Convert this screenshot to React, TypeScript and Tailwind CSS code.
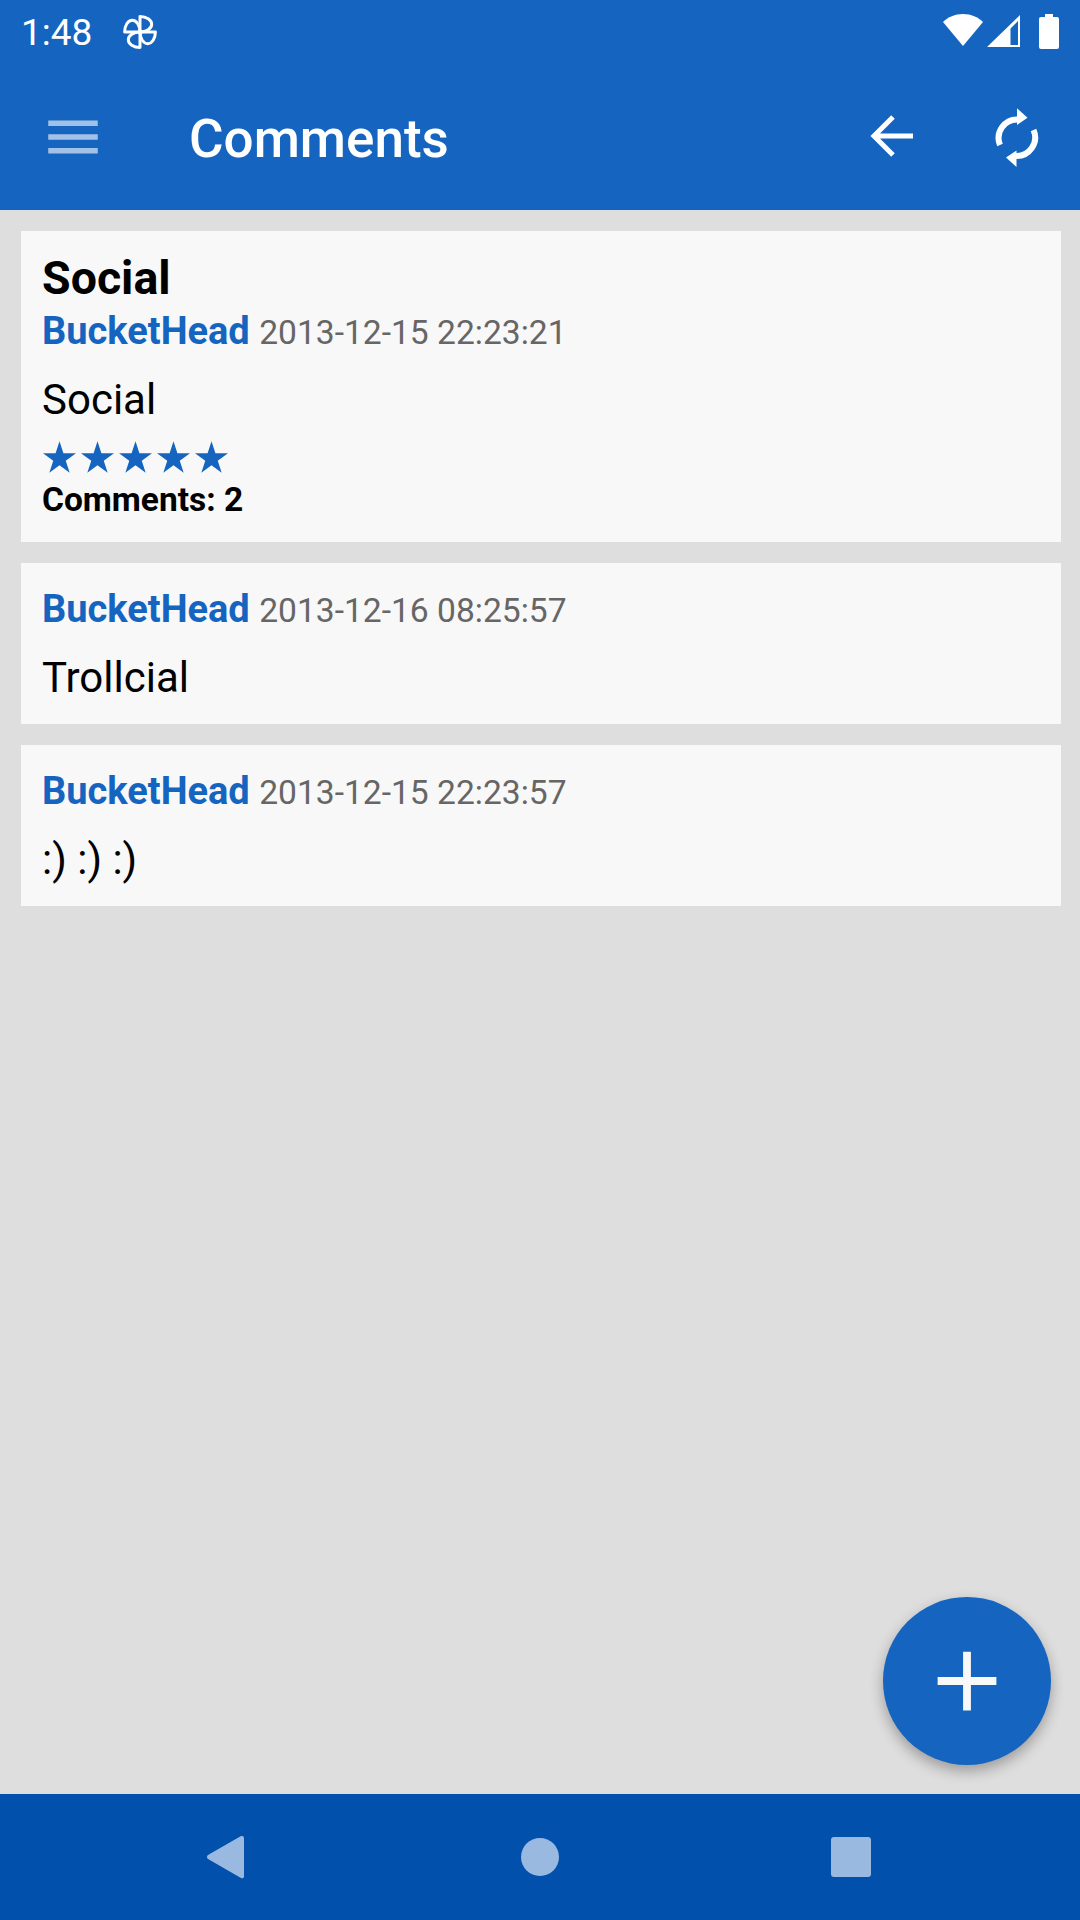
import { IoMdAdd, IoMdMenu } from "react-icons/io";

function Meta({ date }: { date: string }) {
  return (
    <p className="text-[33.6px] leading-[46px] text-[#666666]">
      <span className="font-bold text-[#1565c0] text-[38px]">BucketHead </span>{date}
    </p>
  );
}

function CommentCard({ date, text }: { date: string; text: string }) {
  return (
    <article className="bg-[#f8f8f8] px-[21px] pt-[23px] h-[161px]">
      <Meta date={date} />
      <p className="mt-[16px] text-[42px] leading-[56px] text-black">{text}</p>
    </article>
  );
}

function PinwheelIcon() {
  return (
    <svg width="34" height="34" viewBox="0 0 32 32" fill="none" stroke="white" strokeWidth="2.800" strokeLinejoin="round">
      <path d="M16 16V1.500a11 7.250 0 0 1 0 14.500Z" />
      <path d="M16 16H30.500a7.250 11 0 0 1-14.500 0Z" />
      <path d="M16 16V30.500a11 7.250 0 0 1 0-14.500Z" />
      <path d="M16 16H1.500a7.250 11 0 0 1 14.500 0Z" />
    </svg>
  );
}

function StatusIcons() {
  return (
    <div className="flex items-start gap-[4px]">
      <svg width="40" height="34" viewBox="0 0 40 34" fill="white" className="mt-[13px]">
        <path d="M0 9C5 4 12 1 20 1s15 3 20 8L20 33Z" />
      </svg>
      <svg width="33" height="33" viewBox="0 0 33 33" className="mt-[14px]">
        <path fillRule="evenodd" fill="white" d="M33 1V33H0ZM31 7 23.500 14.500V31H31Z" />
      </svg>
      <svg width="20" height="35" viewBox="0 0 20 35" fill="white" className="ml-[15px] mt-[14px]">
        <path d="M6 0h8v3h4a2 2 0 0 1 2 2v28a2 2 0 0 1-2 2H2a2 2 0 0 1-2-2V5a2 2 0 0 1 2-2h4Z" />
      </svg>
    </div>
  );
}

function BackArrow() {
  return (
    <svg width="44" height="44" viewBox="0 0 44 44" fill="none" stroke="white" strokeWidth="5" className="ml-auto -mt-[2px]">
      <path d="M44 22H5M24 3 5 22l19 19" />
    </svg>
  );
}

function SyncIcon() {
  return (
    <svg width="60" height="60" viewBox="0 0 60 60" className="ml-[74px] mr-[33px] mt-[3px]">
      <g fill="none" stroke="white" strokeWidth="6">
        <path d="M31 11.500A18.500 18.500 0 0 0 13 37" />
        <path d="M28.500 48A18.500 18.500 0 0 0 46.500 22" />
      </g>
      <path fill="white" d="M30 .3 40.500 9.800 30 17ZM29.500 59 19 49.500 29.500 42.500Z" />
    </svg>
  );
}

function Star() {
  return (
    <svg width="33" height="32" viewBox="0 0 38 36" fill="#1565c0">
      <path d="M19 0l4.500 13.800H38L26.200 22.300 30.700 36 19 27.500 7.300 36l4.500-13.700L0 13.800h14.500Z" />
    </svg>
  );
}

export default function App() {
  return (
    <div className="flex h-[1920px] w-[1080px] flex-col bg-[#dedede] font-['Roboto',sans-serif]">
      <header className="h-[210px] shrink-0 bg-[#1565c0] text-white">
        <div className="flex h-[63px] items-start justify-between pl-[21px] pr-[21px]">
          <div className="flex items-start gap-[31px]">
            <span className="mt-[12px] text-[37px] leading-[42px]">1:48</span>
            <div className="mt-[15px]">
              <PinwheelIcon />
            </div>
          </div>
          <StatusIcons />
        </div>
        <div className="flex h-[147px] items-center">
          <IoMdMenu className="ml-[40px] h-[66px] w-[66px] text-white/60" />
          <h1 className="ml-[83px] mt-[5px] text-[53px] font-medium leading-none">Comments</h1>
          <BackArrow />
          <SyncIcon />
        </div>
      </header>

      <main className="relative flex-1">
        <div className="flex flex-col gap-[21px] pl-[21px] pr-[19px] pt-[21px]">
          <article className="h-[311px] bg-[#f8f8f8] px-[21px] pt-[22px]">
            <h2 className="text-[46.500px] font-bold leading-[50px] text-black">Social</h2>
            <div className="mt-[5px]">
              <Meta date="2013-12-15 22:23:21" />
            </div>
            <p className="mt-[19px] text-[42px] leading-[50px] text-black">Social</p>
            <div className="ml-[1px] mt-[16px] flex gap-[5px]">
              <Star />
              <Star />
              <Star />
              <Star />
              <Star />
            </div>
            <p className="mt-[7px] text-[33.500px] font-bold leading-[40px] text-black">Comments: 2</p>
          </article>
          <CommentCard date="2013-12-16 08:25:57" text="Trollcial" />
          <CommentCard date="2013-12-15 22:23:57" text=":) :) :)" />
        </div>
        <button className="absolute bottom-[29px] right-[29px] flex h-[168px] w-[168px] items-center justify-center rounded-full bg-[#1565c0] shadow-[0_6px_14px_rgba(0,0,0,0.3)]">
          <IoMdAdd className="h-[94px] w-[94px] text-[#f8f8f8]" />
        </button>
      </main>

      <nav className="flex h-[126px] shrink-0 items-center bg-[#0050ac]">
        <svg width="38" height="44" viewBox="0 0 38 44" fill="#99b9e0" className="ml-[206px]">
          <path d="M36 1a2 2 0 0 1 2 2v38a2 2 0 0 1-3 2L2 24a2.500 2.500 0 0 1 0-4L35 1Z" />
        </svg>
        <div className="ml-[277px] h-[38px] w-[38px] rounded-full bg-[#99b9e0]" />
        <div className="ml-[272px] h-[40px] w-[40px] rounded-[3px] bg-[#99b9e0]" />
      </nav>
    </div>
  );
}
